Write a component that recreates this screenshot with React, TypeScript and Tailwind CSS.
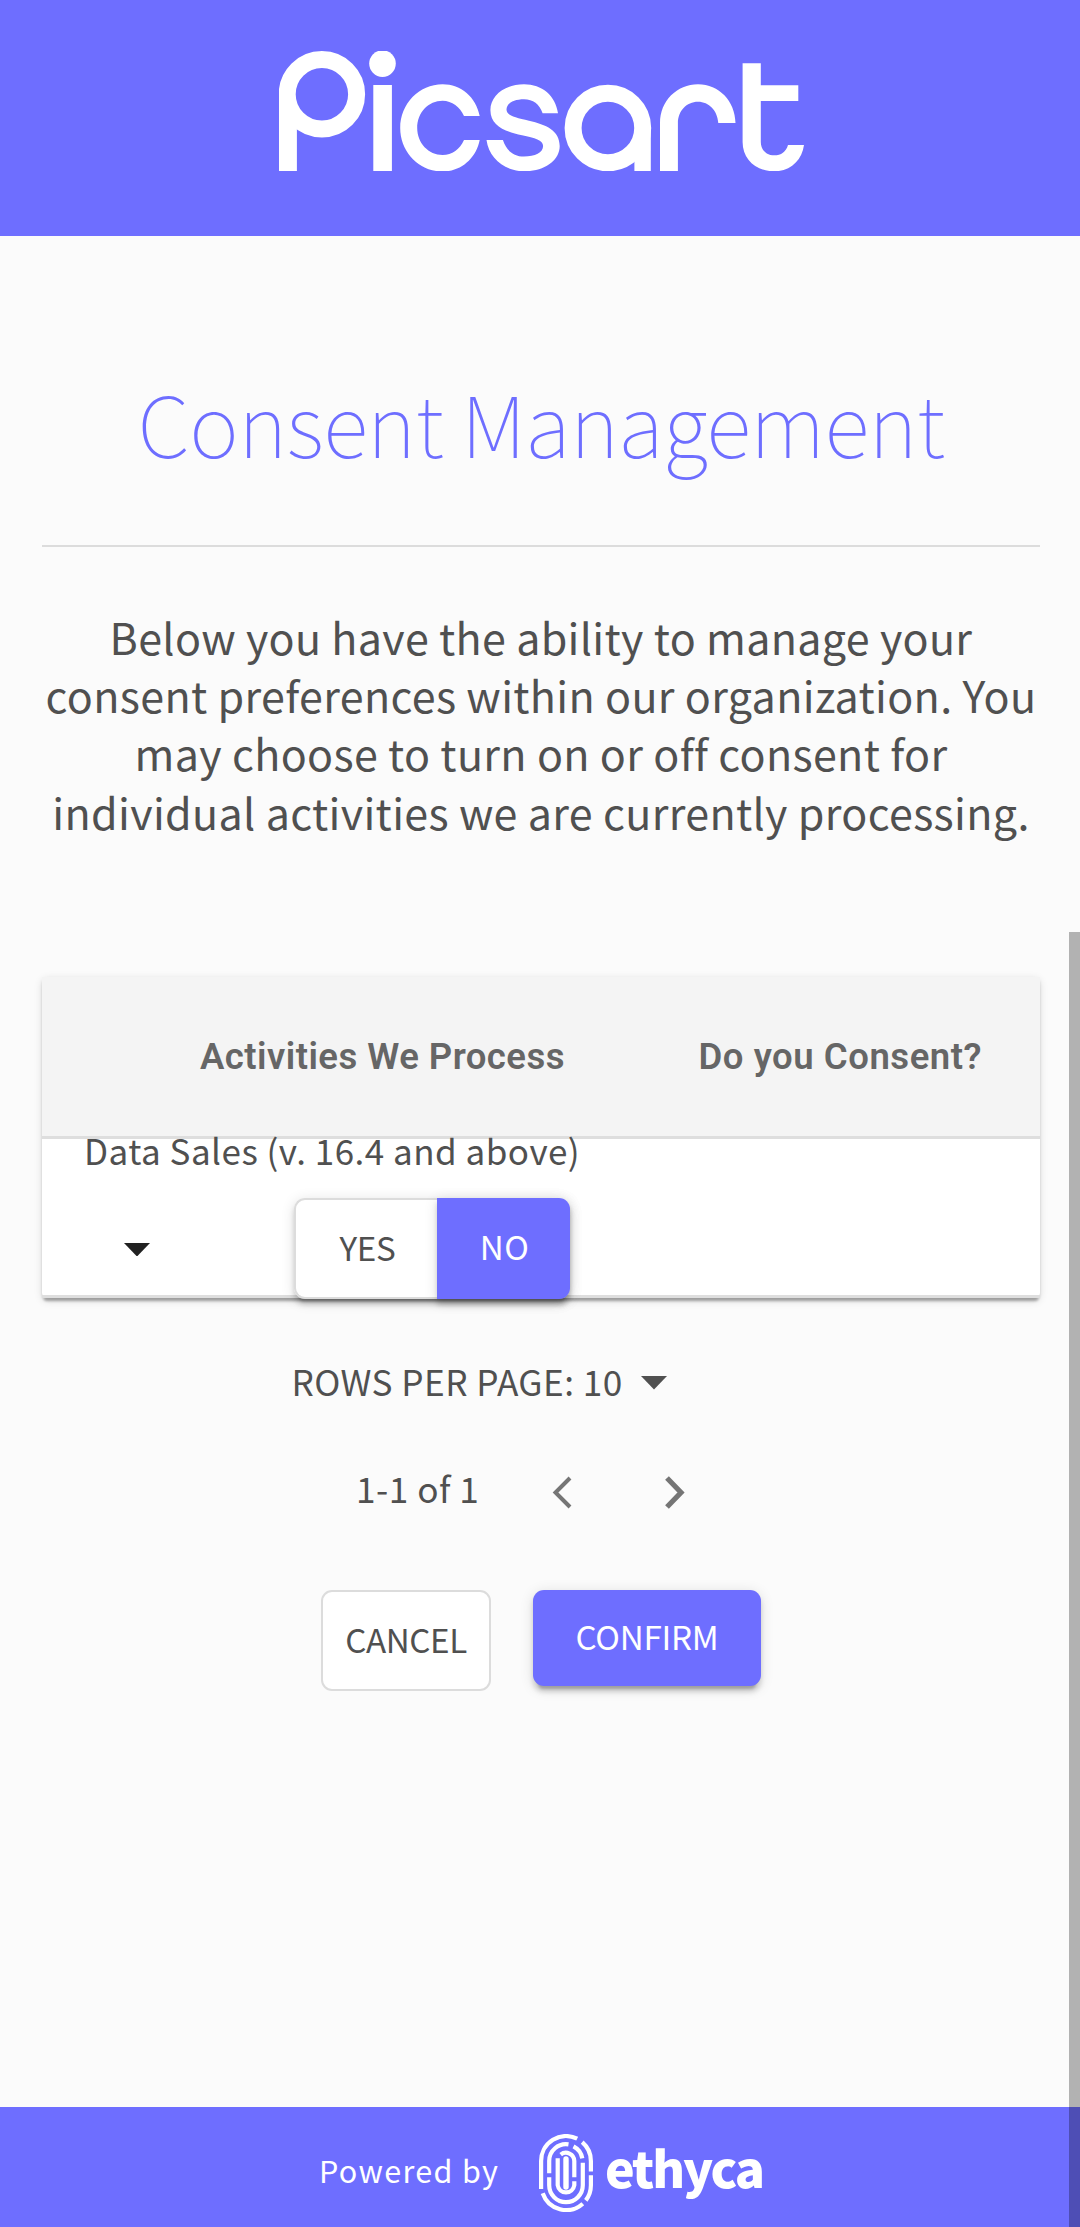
import React from "react";

function PicsartLogo() {
  return (
    <svg role="img" aria-label="Picsart" width="526" height="120" viewBox="0 0 526 120" fill="#fff" className="block">
      <circle cx="42.9" cy="43.3" r="34.7" fill="none" stroke="#fff" strokeWidth="17" />
      <path d="M0 43H8L17.9 72V120H0Z" />
      <circle cx="103.5" cy="12.6" r="13.3" />
      <rect x="94.3" y="34" width="18.6" height="86" />
      <path d="M200.7 65C197 46 182 33.3 163.6 33.3C140 33.3 121.2 53 121.2 77C121.2 101 140 120.5 163.6 120.5C182 120.5 197 107.5 200.7 89H185C181 98 173 104 163.6 104C149.5 104 138.2 92 138.2 77C138.2 61.5 149.5 49.7 163.6 49.7C173 49.7 181 56 185 65Z" />
      <path d="M279 62.3C276.5 44.5 263 33.3 245 33.3C226 33.3 211.4 44.5 211.4 59C211.4 75 226 80.5 243 84.3C256 87.3 264.1 89 264.1 95C264.1 101.5 256 105.5 245 105.5C234.5 105.5 227.5 99.5 223.9 89H207.5C210 107.5 226 120.3 245 120.3C265.5 120.3 280.7 109.5 280.7 95C280.7 79.5 267 73.5 250 69.7C236 66.7 227.5 64.5 227.5 58.5C227.5 52 235 48.2 245 48.2C254 48.2 260.5 53 263.6 62.3Z" />
      <circle cx="328.9" cy="77" r="34.8" fill="none" stroke="#fff" strokeWidth="17" />
      <path d="M363.5 77H371.8V120H355.4V100Z" />
      <path d="M381 120V72C381 50 398 33.3 419 33.3C440 33.3 456 50 456.5 72H439.3C438.5 59.5 430 50.7 419 50.7C407.5 50.7 398.9 60 398.9 72V120Z" />
      <path d="M463.6 12.3H481.8V34.3H519.3V50H481.8V91C481.8 99 487.5 104.3 495.4 104.3C502 104.3 507 101 509 94H525C523 109.5 511 120.3 495.4 120.3C477 120.3 463.6 108.5 463.6 91Z" />
    </svg>
  );
}

function Fingerprint() {
  return (
    <svg aria-hidden="true" width="54" height="78.3" viewBox="0 0 54 78.3" fill="none" stroke="#fff" strokeWidth="4.2" className="block">
      <path d="M2.1 55V27A24.9 24.9 0 0 1 38.2 4.7" />
      <path d="M43.2 8.2A24.9 24.9 0 0 1 51.9 27V37.5" />
      <path d="M51.9 41.3V51.3A24.9 24.9 0 0 1 46.8 66.4" />
      <path d="M43.8 69.7A24.9 24.9 0 0 1 3.7 59.2" />
      <path d="M10.2 39.3V27A16.8 16.8 0 0 1 29.5 10.4" />
      <path d="M34.5 12.3A16.8 16.8 0 0 1 43.3 24.3" />
      <path d="M43.8 28.7V51.3A16.8 16.8 0 0 1 10.2 51.3V43.3" />
      <path d="M21.7 20.6A8.4 8.4 0 0 1 35.3 27V43.3" />
      <path d="M35.3 47.3V51.3A8.4 8.4 0 0 1 18.7 51.3V24.3" />
      <path d="M27 25V53" strokeWidth="5.4" strokeLinecap="round" />
    </svg>
  );
}

function Caret({ className }: { className: string }) {
  return (
    <svg aria-hidden="true" width="26" height="13.5" viewBox="0 0 26 13.5" fill="currentColor" className={className}>
      <path d="M0 0H26L13 13.5Z" />
    </svg>
  );
}

export default function App() {
  return (
    <div className="relative flex h-[2227px] w-[1080px] flex-col overflow-hidden bg-[#fbfbfb] font-['Noto_Sans_CJK_SC',sans-serif] text-[#505050]">
      <header className="flex h-[236px] shrink-0 bg-[#6e6eff] pt-[51px] pl-[279px]">
        <PicsartLogo />
      </header>

      <main className="flex grow flex-col pr-10 pl-[42px]">
        <h1 className="mt-[124px] text-center text-[84.5px] leading-[122px] font-thin tracking-[-0.645px] whitespace-nowrap text-[#6e6eff]">
          Consent Management
        </h1>
        <hr className="mt-[63px] h-[2px] border-0 bg-[#dcdcdc]" />
        <p className="mt-[59.6px] h-[234px] text-center text-[43px] leading-[58.4px] tracking-[0.34px] whitespace-nowrap">
          Below you have the ability to manage your
          <br />
          consent preferences within our organization. You
          <br />
          may choose to turn on or off consent for
          <br />
          individual activities we are currently processing.
        </p>

        <section className="mt-[136.4px] h-[321px] shrink-0 rounded-[5px] bg-white shadow-[0_5.5px_2.75px_-2.75px_rgba(0,0,0,0.2),0_2.75px_2.75px_0_rgba(0,0,0,0.14),0_2.75px_8.25px_0_rgba(0,0,0,0.12)]">
          <div className="flex h-[162px] items-center border-b-[3px] border-[#dedede] bg-[#f4f4f4] pt-[2px] pl-[158px] font-[Roboto,sans-serif] text-[36.5px] font-semibold whitespace-nowrap text-[#666]">
            <div className="w-[498.500px] tracking-[0.46px]">Activities We Process</div>
            <div className="tracking-[0.55px]">Do you Consent?</div>
          </div>
          <div className="flex h-[159px] flex-col border-b-[3px] border-[#dedede]">
            <div className="-mt-[14px] h-[50px] shrink-0 pl-[42px] text-[35px] leading-[50px] tracking-[0.48px] whitespace-nowrap">
              Data Sales (v. 16.4 and above)
            </div>
            <div className="mt-[23px] flex items-start pl-[82px]">
              <Caret className="mt-[45px] text-[#212121]" />
              <div className="ml-[144px] flex h-[101px] rounded-[11px] text-[33.2px] leading-[93px] shadow-[0_8.25px_2.75px_-5.5px_rgba(0,0,0,0.2),0_5.5px_5.5px_0_rgba(0,0,0,0.14),0_2.75px_13.75px_0_rgba(0,0,0,0.12)]">
                <button className="w-[143px] rounded-l-[11px] border-2 border-r-0 border-[#dcdcdc] bg-white pb-1.5 pl-0.5 tracking-[-0.3px]">YES</button>
                <button className="w-[133px] rounded-r-[11px] bg-[#6e6eff] pb-1.5 pl-0.5 tracking-[0.5px] text-white shadow-[0_5.5px_5.5px_0_rgba(0,0,0,0.14),0_2.75px_13.75px_0_rgba(0,0,0,0.12)]">
                  NO
                </button>
              </div>
            </div>
          </div>
        </section>

        <div className="mt-[58px] flex h-[50px] items-center pl-[249.500px] text-[35.2px] leading-[50px] whitespace-nowrap">
          <span className="w-[349px] tracking-[0.42px]">ROWS PER PAGE: 10</span>
          <Caret className="mt-[4px]" />
        </div>
        <div className="mt-[57px] flex h-[50px] items-center pl-[314px] text-[35.2px] leading-[50px] whitespace-nowrap">
          <span className="w-[196px] tracking-[0.5px]">1-1 of 1</span>
          <svg aria-label="Previous page" width="20" height="33" viewBox="0 0 20 33" fill="none" stroke="#757575" strokeWidth="4" className="mt-[10px]">
            <path d="M18 2L3.5 16.5L18 31" />
          </svg>
          <svg aria-label="Next page" width="20" height="33" viewBox="0 0 20 33" fill="none" stroke="#757575" strokeWidth="5.2" className="mt-[10px] ml-[93px]">
            <path d="M2 2L16 16.5L2 31" />
          </svg>
        </div>

        <div className="mt-[77px] flex items-start gap-[42px] pl-[279px] text-[33.2px]">
          <button className="h-[101px] w-[170px] rounded-[11px] border-2 border-[#dcdcdc] bg-white pb-1.5 leading-[93px] tracking-[-0.4px]">CANCEL</button>
          <button className="h-24 w-[228px] rounded-[11px] bg-[#6e6eff] pb-[5px] leading-[91px] tracking-[-0.25px] text-white shadow-[0_8.25px_2.75px_-5.5px_rgba(0,0,0,0.2),0_5.5px_5.5px_0_rgba(0,0,0,0.14),0_2.75px_13.75px_0_rgba(0,0,0,0.12)]">
            CONFIRM
          </button>
        </div>
      </main>

      <footer className="flex h-[120px] shrink-0 items-start bg-[#6e6eff] pl-[319px] text-white">
        <span className="mt-[41px] w-[220px] text-[30.5px] leading-[44px] tracking-[1.35px] whitespace-nowrap">Powered by</span>
        <div className="mt-[27px]">
          <Fingerprint />
        </div>
        <span className="mt-[23px] ml-3 text-[50px] leading-[72px] font-black tracking-[-2.1px]">ethyca</span>
      </footer>

      <div className="absolute top-[932px] right-0 h-[1295px] w-[11px] bg-black/[0.29]" />
    </div>
  );
}
